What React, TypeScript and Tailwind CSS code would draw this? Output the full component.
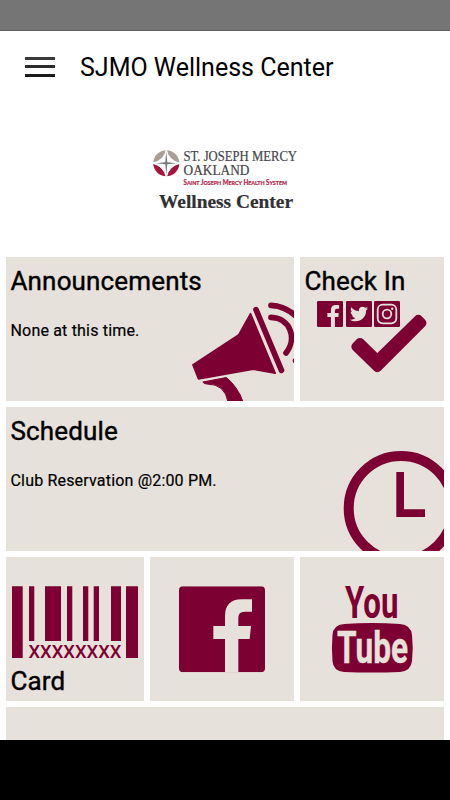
import type { ReactNode } from "react";
import { FaTwitter } from "react-icons/fa";

const MAROON = "#7d0032";
const SAND = "#e6e1da";

function Tile({ className = "", children }: { className?: string; children?: ReactNode }) {
  return <section className={`relative overflow-hidden bg-[#e6e1da] px-[4.5px] ${className}`}>{children}</section>;
}

function Art({ box, children }: { box: string; children: ReactNode }) {
  return (
    <svg viewBox={box} className="absolute inset-0 h-full w-full" aria-hidden="true">
      {children}
    </svg>
  );
}

function Heading({ children }: { children: ReactNode }) {
  return (
    <h2 className="relative pt-[6px] text-[26px] leading-9 font-normal tracking-[0.15px] whitespace-nowrap [-webkit-text-stroke:0.4px_black]">
      {children}
    </h2>
  );
}

function Note({ children }: { children: ReactNode }) {
  return (
    <p className="relative mt-[20px] text-[16px] leading-6 tracking-[0.18px] whitespace-nowrap [-webkit-text-stroke:0.2px_black]">
      {children}
    </p>
  );
}

function FacebookMark({ x, y, size }: { x: number; y: number; size: number }) {
  return (
    <svg x={x} y={y} width={size} height={size} viewBox="0 0 258 258">
      <rect width="258" height="258" rx="12" fill={MAROON} />
      <path
        d="M138 260V158H103V119H138V90Q138 39 188 39H219V76H196Q178 76 178 94V119H216L212 158H178V260Z"
        fill={SAND}
      />
    </svg>
  );
}

function InstagramMark() {
  return (
    <g fill="none" stroke={SAND} strokeWidth="1.800">
      <rect x="377.700" y="304.700" width="18.600" height="18.600" rx="5" />
      <circle cx="387" cy="314" r="4.300" />
      <circle cx="392.200" cy="308.800" r="1.200" fill={SAND} stroke="none" />
    </g>
  );
}

function Logo() {
  return (
    <svg viewBox="150 145 150 70" className="h-[70px] w-[150px] overflow-visible">
      <path d="M153.300 163.300A13 13 0 0 1 179.300 163.300Z" fill="#a89f97" />
      <path d="M153.300 163.300A13 13 0 0 0 179.300 163.300Z" fill="#a3153c" />
      <path
        d="M166.300 149.300Q167.800 160 179.800 163.300Q168.500 166.300 166.300 177.300Q164.100 166.300 152.800 163.300Q164.800 160 166.300 149.300Z"
        fill="#fff"
        stroke="#fff"
        strokeWidth="1"
      />
      <path d="M166.300 151.500L167.300 162.300L176.500 163.300L167.300 164.300L166.300 175L165.300 164.300L156.100 163.300L165.300 162.300Z" fill="#77777a" />
      <g fontFamily="Liberation Serif, serif" fill="#45454a" stroke="#45454a" strokeWidth="0.200" fontSize="13.800">
        <text x="183.500" y="161" textLength="113.500" lengthAdjust="spacingAndGlyphs">ST. JOSEPH MERCY</text>
        <text x="183.500" y="175.300" textLength="66" lengthAdjust="spacingAndGlyphs">OAKLAND</text>
      </g>
      <text x="183.500" y="185" fontFamily="Lato, sans-serif" fontWeight="700" fontSize="6.800" fill="#b01e48" stroke="#b01e48" strokeWidth="0.200" textLength="103.500" lengthAdjust="spacingAndGlyphs">
        S<tspan fontSize="5.800">AINT</tspan> J<tspan fontSize="5.800">OSEPH</tspan> M<tspan fontSize="5.800">ERCY</tspan> H<tspan fontSize="5.800">EALTH</tspan> S<tspan fontSize="5.800">YSTEM</tspan>
      </text>
      <text x="159" y="207.500" fontFamily="Liberation Serif, serif" fontWeight="700" fontSize="19" fill="#303034" stroke="#303034" strokeWidth="0.200" textLength="134" lengthAdjust="spacingAndGlyphs">
        Wellness Center
      </text>
    </svg>
  );
}

export default function App() {
  return (
    <div className="flex h-[800px] w-[450px] flex-col overflow-hidden bg-white font-['Roboto',sans-serif] text-black">
      <div className="h-[31px] shrink-0 border-b border-[#5f5f5f] bg-[#757575]" />

      <header className="flex h-[72px] shrink-0 items-center pl-[25px]">
        <button aria-label="Menu" className="-mt-px flex h-5 w-[30px] flex-col justify-between">
          <span className="h-[3px] w-full bg-[#3b3b3b]" />
          <span className="h-[3px] w-full bg-[#2b2b2b]" />
          <span className="h-[3px] w-full bg-[#1b1b1b]" />
        </button>
        <h1 className="mt-[2px] ml-[25px] text-[25px] whitespace-nowrap">SJMO Wellness Center</h1>
      </header>

      <div className="flex h-[154px] shrink-0 justify-center pt-[42px]">
        <Logo />
      </div>

      <main className="flex h-[483px] shrink-0 flex-col gap-1.5 overflow-hidden px-1.5">
        <div className="flex h-36 shrink-0 gap-1.5">
          <Tile className="w-72">
            <Art box="6 257 288 144">
              <g fill={MAROON} stroke={MAROON} strokeLinejoin="round">
                <path d="M250.500 313.500L238.500 335L192.800 364.800L198.500 379L253.300 369.300L275.300 373.300Z" strokeWidth="1.500" />
                <path d="M202.800 382L226.300 377.500Q231 381 236 388T243 402H228Q225 384 207 384Q204 384 202.800 382Z" strokeWidth="1" />
              </g>
              <g fill="none" stroke={MAROON} strokeWidth="5.700" strokeLinecap="round">
                <path d="M256 309.600L281.500 370.300" />
                <path d="M271 305.300Q285 306 295 315.500" />
                <path d="M271 317.300C291 318 297 339 286 353" />
                <path d="M295.500 360.700H296" />
              </g>
            </Art>
            <Heading>Announcements</Heading>
            <Note>None at this time.</Note>
          </Tile>
          <Tile className="flex-1">
            <Art box="300 257 144 144">
              <FacebookMark x={317} y={301} size={26} />
              <rect x="346" y="301" width="26" height="26" rx="1.200" fill={MAROON} />
              <rect x="374" y="301" width="26" height="26" rx="1.200" fill={MAROON} />
              <FaTwitter x={350} y={305} size={18} color={SAND} />
              <InstagramMark />
              <path
                d="M377.300 359.600L418.300 319.500L421.800 323L377.300 367.500L356 346.700L360 342.600Z"
                fill={MAROON}
                stroke={MAROON}
                strokeWidth="9.300"
                strokeLinejoin="round"
              />
            </Art>
            <Heading>Check In</Heading>
          </Tile>
        </div>

        <Tile className="h-36 shrink-0">
          <Art box="6 407 438 144">
            <circle cx="401" cy="508.300" r="52.300" fill="none" stroke={MAROON} strokeWidth="10" />
            <path d="M396.300 472H404V509.300H425V517H396.300Z" fill={MAROON} />
          </Art>
          <Heading>Schedule</Heading>
          <Note>Club Reservation @2:00 PM.</Note>
        </Tile>

        <div className="flex h-36 shrink-0 gap-1.5">
          <Tile className="w-[138px] pt-[100px]">
            <Art box="6 557 138 144">
              <path
                d="M12 586.300H22.700V658H12ZM126 586.300H138V658H126ZM29 586.300H34.300V641H29ZM45 586.300H61V641H45ZM67 586.300H72.300V641H67ZM83 586.300H88.300V641H83ZM93.700 586.300H99V641H93.700ZM111 586.300H121V641H111Z"
                fill={MAROON}
              />
              <text x="28.500" y="658.300" fontSize="19" fontWeight="500" fill={MAROON} textLength="93" lengthAdjust="spacingAndGlyphs">
                XXXXXXXX
              </text>
            </Art>
            <Heading>Card</Heading>
          </Tile>
          <Tile className="w-36">
            <Art box="150 557 144 144">
              <FacebookMark x={179} y={586.300} size={86} />
            </Art>
          </Tile>
          <Tile className="flex-1">
            <Art box="300 557 144 144">
              <path
                d="M344 624Q372 622 400 624Q411 625 412 635Q413.500 648 412 661Q411 671 400 672Q372 673 344 672Q333 671 332.500 661Q331.300 648 332.500 635Q333 625 344 624Z"
                fill={MAROON}
              />
              <g fontWeight="700">
                <text x="345" y="618.300" fontSize="44.500" fill={MAROON} textLength="53.500" lengthAdjust="spacingAndGlyphs">You</text>
                <text x="337" y="663" fontSize="45" fill={SAND} stroke={SAND} strokeWidth="0.400" textLength="71" lengthAdjust="spacingAndGlyphs">Tube</text>
              </g>
            </Art>
          </Tile>
        </div>

        <Tile className="h-36 shrink-0" />
      </main>

      <footer className="flex-1 bg-black" />
    </div>
  );
}
